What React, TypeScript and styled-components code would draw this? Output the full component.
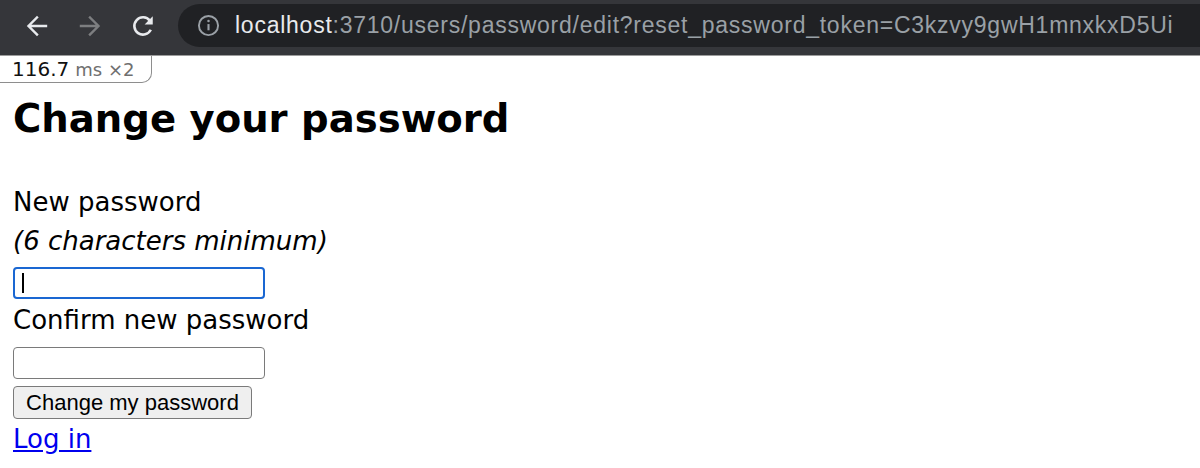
import React from 'react';
import styled, { createGlobalStyle } from 'styled-components';

const GlobalStyle = createGlobalStyle`
  html, body {
    margin: 0;
    background: #ffffff;
  }
`;

const Window = styled.div`
  display: flex;
  flex-direction: column;
  width: 1200px;
  height: 468px;
  overflow: hidden;
`;

const Toolbar = styled.div`
  display: flex;
  align-items: flex-start;
  height: 51px;
  padding: 4px 0 0 10px;
  background: #35363a;
  border-bottom: 1px solid #9c9c9c;
  overflow: hidden;
`;

const NavButton = styled.div<{ $dim?: boolean }>`
  display: flex;
  align-items: center;
  justify-content: center;
  flex: 0 0 53px;
  height: 43px;
  color: ${p => (p.$dim ? '#7d7e80' : '#e8eaed')};
`;

const Omnibox = styled.div`
  display: flex;
  align-items: center;
  gap: 15px;
  flex: 0 0 1100px;
  height: 43px;
  margin-left: 9px;
  padding-left: 19px;
  border-radius: 22px;
  background: #202124;
`;

const Url = styled.div`
  font-family: "Liberation Sans", Arial, sans-serif;
  font-size: 23px;
  letter-spacing: 0.75px;
  color: #9aa0a6;
  white-space: nowrap;
`;

const Host = styled.span`
  color: #e8eaed;
`;

const Page = styled.div`
  position: relative;
  flex: 1;
  padding: 0 13px;
  font-family: "DejaVu Sans", sans-serif;
  color: #000;
`;

const Profiler = styled.div`
  position: absolute;
  top: 0;
  left: 0;
  width: 139px;
  height: 26px;
  padding-left: 12px;
  display: flex;
  align-items: center;
  gap: 6px;
  background: #fff;
  border-right: 1px solid #8e8e8e;
  border-bottom: 1px solid #8e8e8e;
  border-bottom-right-radius: 10px;
  font-family: "DejaVu Sans", sans-serif;
  white-space: nowrap;
`;

const Timing = styled.span`
  font-size: 20px;
  color: #111;
`;

const Unit = styled.span`
  font-size: 18px;
  color: #6f6f6f;
`;

const Title = styled.h1`
  margin: 40px 0 0;
  font-size: 38.6px;
  line-height: 46px;
  font-weight: bold;
`;

const Form = styled.form`
  display: flex;
  flex-direction: column;
  align-items: flex-start;
  margin-top: 41px;
`;

const Label = styled.label<{ $hint?: boolean; $top?: number }>`
  display: block;
  margin-top: ${p => p.$top ?? 0}px;
  font-size: 26px;
  line-height: 39px;
  font-style: ${p => (p.$hint ? 'italic' : 'normal')};
`;

const Field = styled.input<{ $focused?: boolean; $top: number }>`
  box-sizing: border-box;
  width: 252px;
  height: 32px;
  margin: ${p => p.$top}px 0 0;
  padding: 0 6px;
  border: ${p => (p.$focused ? '2px solid #1a67d2' : '1px solid #7a7a7a')};
  border-radius: 4px;
  outline: none;
  background: #fff
    ${p => (p.$focused
      ? 'linear-gradient(#000, #000) no-repeat 7px 50% / 2px 20px'
      : 'none')};
`;

const Submit = styled.button`
  box-sizing: border-box;
  width: 239px;
  height: 33px;
  margin: 7px 0 1px;
  padding: 0;
  border: 1px solid #7a7a7a;
  border-radius: 4px;
  background: #efefef;
  font-family: "Liberation Sans", Arial, sans-serif;
  font-size: 22px;
  color: #000;
`;

const LoginLink = styled.a`
  font-size: 26px;
  line-height: 39px;
  color: #0000ee;
  text-decoration: underline;
`;

const BackIcon = () => (
  <svg width="24" height="24" viewBox="0 0 24 24" fill="none" stroke="currentColor" strokeWidth="2.4" strokeLinecap="square">
    <path d="M21 12H4M12 3.5 3.5 12l8.5 8.5" />
  </svg>
);

const ForwardIcon = () => (
  <svg width="24" height="24" viewBox="0 0 24 24" fill="none" stroke="currentColor" strokeWidth="2.4" strokeLinecap="square">
    <path d="M3 12h17M12 3.5l8.5 8.5-8.5 8.5" />
  </svg>
);

const ReloadIcon = () => (
  <svg width="26" height="26" viewBox="0 0 24 24" fill="none" stroke="currentColor" strokeWidth="2.4">
    <path d="M19.2 15.5A8 8 0 1 1 18.3 7" />
    <path d="M21 3v7.5h-7.5z" fill="currentColor" stroke="none" />
  </svg>
);

const InfoIcon = () => (
  <svg width="23" height="23" viewBox="0 0 24 24" fill="none" stroke="#9aa0a6" strokeWidth="2">
    <circle cx="12" cy="12" r="10" />
    <path d="M12 10.5v6.5" strokeWidth="2.2" />
    <circle cx="12" cy="7.3" r="1.3" fill="#9aa0a6" stroke="none" />
  </svg>
);

export default function App() {
  return (
    <>
      <GlobalStyle />
      <Window>
        <Toolbar>
          <NavButton><BackIcon /></NavButton>
          <NavButton $dim><ForwardIcon /></NavButton>
          <NavButton><ReloadIcon /></NavButton>
          <Omnibox>
            <InfoIcon />
            <Url>
              <Host>localhost</Host>:3710/users/password/edit?reset_password_token=C3kzvy9gwH1mnxkxD5Ui
            </Url>
          </Omnibox>
        </Toolbar>
        <Page>
          <Profiler>
            <Timing>116.7</Timing>
            <Unit>ms ×2</Unit>
          </Profiler>
          <Title>Change your password</Title>
          <Form onSubmit={e => e.preventDefault()}>
            <Label htmlFor="new-password">New password</Label>
            <Label $hint>(6 characters minimum)</Label>
            <Field id="new-password" type="password" $focused $top={6} />
            <Label htmlFor="confirm-password" $top={2}>Confirm new password</Label>
            <Field id="confirm-password" type="password" $top={7} />
            <Submit type="submit">Change my password</Submit>
            <LoginLink href="#">Log in</LoginLink>
          </Form>
        </Page>
      </Window>
    </>
  );
}
